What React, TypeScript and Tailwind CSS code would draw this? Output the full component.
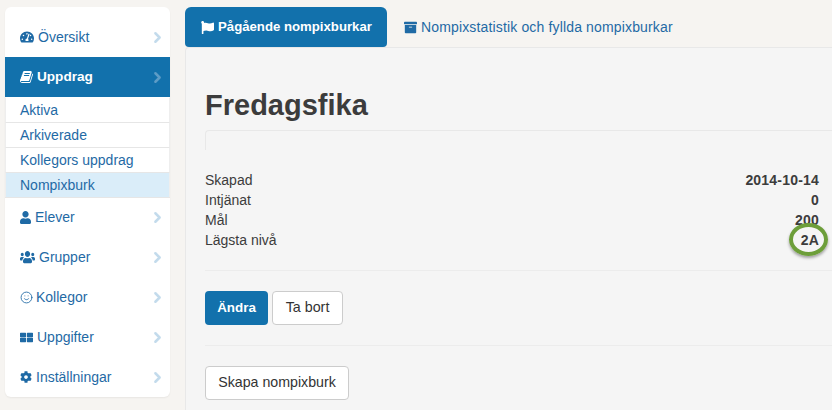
import { ReactNode } from "react";
import { FaArchive, FaCog, FaFlag, FaTachometerAlt, FaThLarge, FaUser, FaUsers } from "react-icons/fa";
import { LuChevronRight, LuSmile } from "react-icons/lu";

function BookIcon() {
  return (
    <svg viewBox="0 0 1792 1792" width={14} height={14} fill="currentColor">
      <path d="M1639 478q40 57 18 129l-275 906q-19 64-76.5 107.5t-122.5 43.5h-923q-77 0-148.5-53.5t-99.5-131.5q-24-67-2-127 0-4 3-27t4-37q1-8-3-21.5t-3-19.5q2-11 8-21t16.5-23.5 16.5-23.5q23-38 45-91.5t30-91.5q3-10 .5-30t-.5-28q3-11 17-28t17-23q21-36 42-92t25-90q1-9-2.5-32t.5-28q4-13 22-30.5t22-22.5q19-26 42.5-84.5t27.5-96.5q1-8-3-25.5t-2-26.5q2-8 9-18t18-23 17-21q8-12 16.5-30.5t15-35 16-36 19.5-32 26.5-23.5 36-11.5 47.5 5.5l-1 3q38-9 51-9h761q74 0 114 56t18 130l-274 906q-36 119-71.5 153.5t-128.5 34.5h-869q-27 0-38 15-11 16-1 43 24 70 144 70h923q29 0 56-15.5t35-41.5l300-987q7-22 5-57 38 15 59 43zm-1064 2q-4 13 2 22.5t20 9.5h608q13 0 25.5-9.5t16.5-22.5l21-64q4-13-2-22.5t-20-9.5h-608q-13 0-25.5 9.5t-16.5 22.5zm-83 256q-4 13 2 22.5t20 9.5h608q13 0 25.5-9.5t16.5-22.5l21-64q4-13-2-22.5t-20-9.5h-608q-13 0-25.5 9.5t-16.5 22.5z" />
    </svg>
  );
}

function NavItem({ icon, label, active, gap }: { icon: ReactNode; label: string; active?: boolean; gap: string }) {
  return (
    <div className={`flex h-10 items-center justify-between pl-[15px] pr-[4px] ${active ? "bg-[#1271ac] text-[13.6px] font-bold text-white" : "text-[14px] text-[#1f6aa5]"}`}>
      <span className={`flex items-center ${gap}`}>
        {icon}
        {label}
      </span>
      <LuChevronRight size={17} strokeWidth={3.5} className={active ? "text-[#5d9cc6]" : "text-[#c3dbec]"} />
    </div>
  );
}

function SubItem({ label, active, first }: { label: string; active?: boolean; first?: boolean }) {
  return (
    <div className={`flex h-[25px] items-center border-x border-t border-x-[#eeeeee] pl-[14px] text-[14px] text-[#1f6aa5] ${first ? "border-t-white" : "border-t-[#e6e6e6]"} ${active ? "bg-[#daedf9] shadow-[0_1px_0_#e6e6e6]" : "bg-white"}`}>
      {label}
    </div>
  );
}

function InfoRow({ label, value }: { label: string; value: string }) {
  return (
    <div className="flex h-5 items-center justify-between">
      <span>{label}</span>
      <span className="font-bold tracking-[0.2px]">{value}</span>
    </div>
  );
}

export default function App() {
  return (
    <div className="flex h-[410px] w-[832px] gap-[15px] overflow-hidden bg-[#f6f4f1] pl-[5px] pt-[7px] font-['Liberation_Sans',sans-serif] text-[14px] text-[#3c3c3c]">
      <aside className="h-[390px] w-[165px] shrink-0 rounded-md bg-white pt-[10px] shadow-[0_1px_2px_rgba(0,0,0,0.06)]">
        <NavItem icon={<FaTachometerAlt size={14} />} label="Översikt" gap="gap-[4px]" />
        <NavItem icon={<BookIcon />} label="Uppdrag" active gap="gap-[3px]" />
        <SubItem label="Aktiva" first />
        <SubItem label="Arkiverade" />
        <SubItem label="Kollegors uppdrag" />
        <SubItem label="Nompixburk" active />
        <NavItem icon={<FaUser preserveAspectRatio="none" className="h-[13px] w-[11px]" />} label="Elever" gap="gap-[4px]" />
        <NavItem icon={<FaUsers preserveAspectRatio="none" className="h-[14px] w-[15px]" />} label="Grupper" gap="gap-[4px]" />
        <NavItem icon={<LuSmile size={13} strokeWidth={1.6} />} label="Kollegor" gap="gap-[3px]" />
        <NavItem icon={<FaThLarge preserveAspectRatio="none" className="h-[11px] w-[13px]" />} label="Uppgifter" gap="gap-[4px]" />
        <NavItem icon={<FaCog size={12} />} label="Inställningar" gap="gap-[4px]" />
      </aside>

      <main className="min-w-0 flex-1">
        <div className="flex h-10 items-center">
          <div className="flex h-10 w-[202px] items-center gap-1 rounded-t-md rounded-b-sm bg-[#1271ac] pl-[16px] text-[13.2px] font-bold text-white">
            <FaFlag size={13} />
            Pågående nompixburkar
          </div>
          <div className="flex items-center gap-1 pl-[17px] tracking-[0.15px] text-[#1f6aa5]">
            <FaArchive size={13} />
            Nompixstatistik och fyllda nompixburkar
          </div>
        </div>

        <div className="h-[400px] rounded-tl-sm border-l border-t border-[#e8e8e8] bg-[#f5f5f5] pl-[19px] pt-[37px]">
          <h1 className="text-[29px] leading-[40px] font-bold text-[#3c3c3c]">Fredagsfika</h1>
          <div className="mt-[5px] h-[20px] rounded-tl-sm border-l border-t border-[#e8e8e8]" />

          <div className="relative mt-[20px] pr-[13px]">
            <InfoRow label="Skapad" value="2014-10-14" />
            <InfoRow label="Intjänat" value="0" />
            <InfoRow label="Mål" value="200" />
            <InfoRow label="Lägsta nivå" value="2A" />
            <div className="absolute -bottom-[6px] right-[4px] h-[33px] w-[39px] rounded-[50%] border-[4px] border-[#6d9e3a] shadow-[0_2px_3px_rgba(0,0,0,0.35)]" />
          </div>

          <hr className="mt-[20px] border-[#ececec]" />
          <div className="mt-[20px] flex gap-[4px]">
            <button className="h-[34px] w-[63px] rounded bg-[#1271ac] text-[13.4px] font-bold text-white">Ändra</button>
            <button className="h-[34px] w-[71px] rounded border border-[#cccccc] bg-white text-[14.3px] text-[#333333]">Ta bort</button>
          </div>
          <hr className="mt-[20px] border-[#ececec]" />
          <button className="mt-[20px] h-[34px] w-[144px] rounded border border-[#cccccc] bg-white text-[14.2px] text-[#333333]">Skapa nompixburk</button>
        </div>
      </main>
    </div>
  );
}
